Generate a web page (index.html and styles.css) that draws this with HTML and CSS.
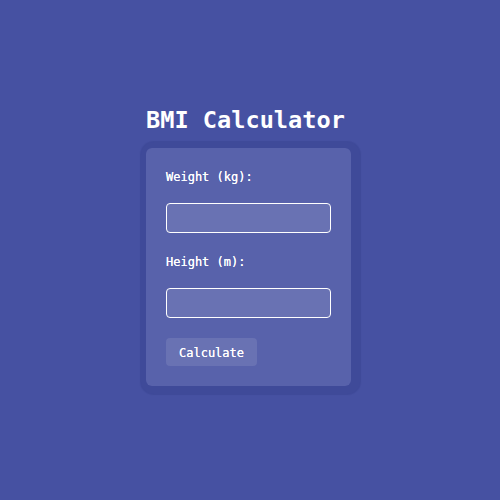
FILE: index.html
```html
<!DOCTYPE html>
<html>
<head>
<meta charset="utf-8">
<link rel="stylesheet" href="styles.css">
</head>
<body>
<main class="app">
  <div class="wrap">
    <h1 class="title">BMI Calculator</h1>
    <form class="card">
      <label class="label" for="w">Weight (kg):</label>
      <input class="field" id="w" type="text">
      <label class="label" for="h">Height (m):</label>
      <input class="field" id="h" type="text">
      <button class="btn" type="button">Calculate</button>
    </form>
  </div>
</main>
</body>
</html>
```
FILE: styles.css
```css
html, body {
  margin: 0;
  padding: 0;
}
body {
  background: #4651a2;
  font-family: "DejaVu Sans Mono", monospace;
  color: #fff;
}
.app {
  height: 500px;
  box-sizing: border-box;
  padding-bottom: 8px;
  display: flex;
  align-items: center;
  justify-content: center;
}
.wrap {
  width: 208px;
  display: flex;
  flex-direction: column;
  align-items: flex-start;
}
.title {
  margin: 0 0 14px;
  font-size: 23.6px;
  line-height: 28px;
  font-weight: bold;
}
.card {
  width: 165px;
  padding: 20px;
  background: rgba(255, 255, 255, 0.1);
  border-radius: 6px;
  box-shadow: 2px 1px 1px 8px rgba(20, 25, 90, 0.12);
  display: flex;
  flex-direction: column;
  align-items: flex-start;
}
.label {
  font-size: 12px;
  line-height: 16px;
  padding-top: 1px;
  margin-bottom: 18px;
  text-shadow: 0 0 0.4px #fff;
}
.field {
  box-sizing: border-box;
  width: 165px;
  height: 30px;
  margin: 0 0 20px;
  border: 1px solid #fff;
  border-radius: 4px;
  background: rgba(255, 255, 255, 0.1);
  color: #fff;
  font-family: inherit;
}
.btn {
  box-sizing: border-box;
  height: 28px;
  padding: 1px 13px 0;
  border: none;
  border-radius: 4px;
  background: rgba(255, 255, 255, 0.1);
  color: #fff;
  font-family: "DejaVu Sans Mono", monospace;
  font-size: 12px;
  text-shadow: 0 0 0.4px #fff;
}
```
